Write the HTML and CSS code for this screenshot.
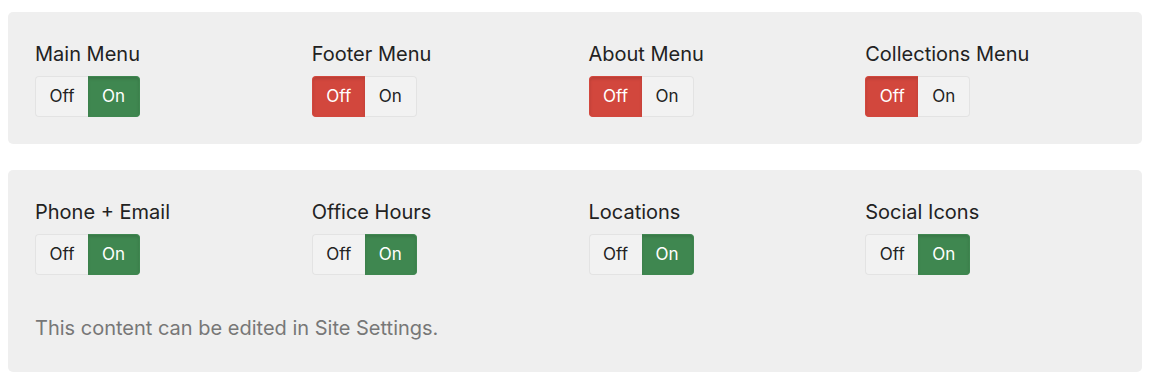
FILE: index.html
```html
<!DOCTYPE html>
<html>
<head>
<meta charset="utf-8">
<link rel="stylesheet" href="styles.css">
</head>
<body>
<div class="page">
  <section class="panel">
    <div class="grid">
      <div class="field">
        <div class="label">Main Menu</div>
        <div class="toggle"><span class="opt">Off</span><span class="opt on">On</span></div>
      </div>
      <div class="field">
        <div class="label">Footer Menu</div>
        <div class="toggle"><span class="opt off">Off</span><span class="opt">On</span></div>
      </div>
      <div class="field">
        <div class="label">About Menu</div>
        <div class="toggle"><span class="opt off">Off</span><span class="opt">On</span></div>
      </div>
      <div class="field">
        <div class="label">Collections Menu</div>
        <div class="toggle"><span class="opt off">Off</span><span class="opt">On</span></div>
      </div>
    </div>
  </section>
  <section class="panel">
    <div class="grid">
      <div class="field">
        <div class="label">Phone + Email</div>
        <div class="toggle"><span class="opt">Off</span><span class="opt on">On</span></div>
      </div>
      <div class="field">
        <div class="label">Office Hours</div>
        <div class="toggle"><span class="opt">Off</span><span class="opt on">On</span></div>
      </div>
      <div class="field">
        <div class="label">Locations</div>
        <div class="toggle"><span class="opt">Off</span><span class="opt on">On</span></div>
      </div>
      <div class="field">
        <div class="label">Social Icons</div>
        <div class="toggle"><span class="opt">Off</span><span class="opt on">On</span></div>
      </div>
    </div>
    <p class="note">This content can be edited in Site Settings.</p>
  </section>
</div>
</body>
</html>
```

FILE: styles.css
```css
* { box-sizing: border-box; }
html, body { margin: 0; padding: 0; background: #fff; }
body {
  font-family: Inter, "Noto Sans", "Liberation Sans", sans-serif;
  color: #222;
}
.page {
  padding: 12px 10px 0 8px;
  display: flex;
  flex-direction: column;
  gap: 26px;
}
.panel {
  background: #efefef;
  border-radius: 5px;
  padding: 30px 0 27px 27px;
}
.grid {
  display: grid;
  grid-template-columns: repeat(4, 1fr);
}
.field {
  display: flex;
  flex-direction: column;
  align-items: flex-start;
  gap: 10px;
}
.label {
  font-size: 20px;
  line-height: 24px;
  color: #222;
}
.toggle {
  display: flex;
  height: 41px;
}
.opt {
  display: flex;
  align-items: center;
  justify-content: center;
  font-size: 17px;
  color: #222;
  background: #f2f2f2;
  border: 1px solid #e3e3e3;
  height: 41px;
  padding-bottom: 2px;
}
.opt:first-child {
  width: 53px;
  border-radius: 4px 0 0 4px;
  border-right: none;
}
.opt:last-child {
  width: 52px;
  border-radius: 0 4px 4px 0;
  border-left: none;
}
.opt.on {
  background: #3f8750;
  border-color: #3f8750;
  color: #fff;
  box-shadow: inset 0 2px 3px rgba(0,0,0,0.12);
}
.opt.off {
  background: #d2473d;
  border-color: #d2473d;
  color: #fff;
  box-shadow: inset 0 2px 3px rgba(0,0,0,0.12);
}
.note {
  margin: 41px 0 5px;
  font-size: 20px;
  line-height: 24px;
  color: #777;
}
```
